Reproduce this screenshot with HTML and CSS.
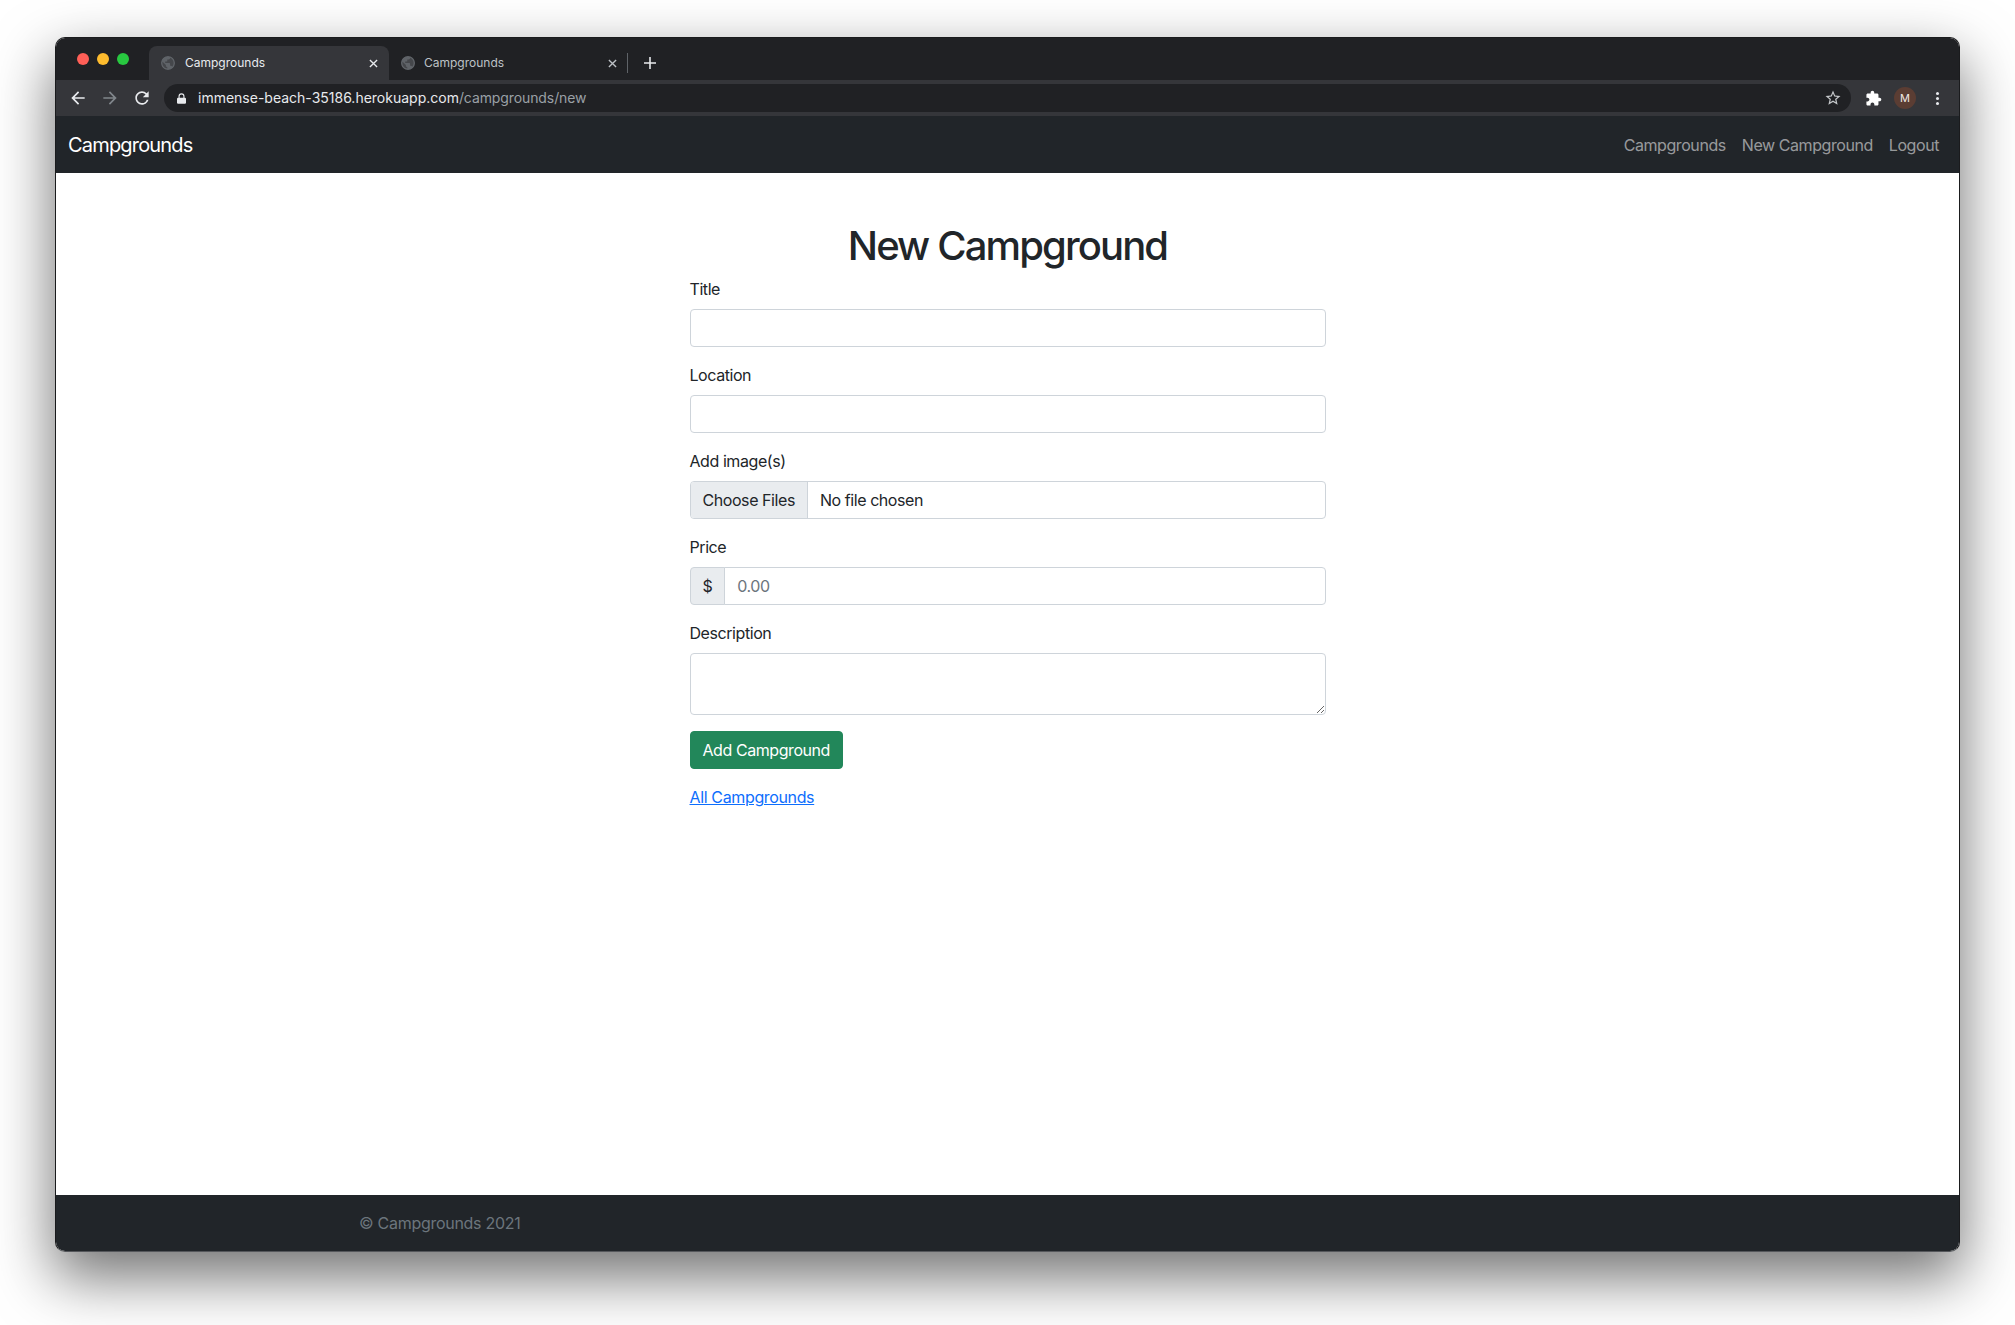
FILE: index.html
```html
<!DOCTYPE html>
<html lang="en">
  <head>
    <meta charset="UTF-8" />
    <meta name="viewport" content="width=device-width, initial-scale=1.0" />
    <link rel="stylesheet" href="styles.css">
    <title>New Campground</title>
  </head>

  <body>
    <div class="window">
      <!-- browser chrome -->
      <div class="tabstrip">
        <div class="lights">
          <span class="light red"></span>
          <span class="light yellow"></span>
          <span class="light green"></span>
        </div>
        <div class="tab active">
          <svg class="favicon" viewBox="2 2 20 20"><path d="M12 2C6.48 2 2 6.48 2 12s4.48 10 10 10 10-4.48 10-10S17.52 2 12 2zm-1 17.93c-3.95-.49-7-3.85-7-7.93 0-.62.08-1.21.21-1.79L9 15v1c0 1.1.9 2 2 2v1.93zm6.9-2.54c-.26-.81-1-1.39-1.9-1.39h-1v-3c0-.55-.45-1-1-1H8v-2h2c.55 0 1-.45 1-1V7h2c1.1 0 2-.9 2-2v-.41c2.93 1.19 5 4.06 5 7.41 0 2.08-.8 3.97-2.1 5.39z"/></svg>
          <span class="tab-title">Campgrounds</span>
          <svg class="tab-close" viewBox="0 0 10 10"><path d="M1 1l8 8M9 1l-8 8"/></svg>
        </div>
        <div class="tab">
          <svg class="favicon" viewBox="2 2 20 20"><path d="M12 2C6.48 2 2 6.48 2 12s4.48 10 10 10 10-4.48 10-10S17.52 2 12 2zm-1 17.93c-3.95-.49-7-3.85-7-7.93 0-.62.08-1.21.21-1.79L9 15v1c0 1.1.9 2 2 2v1.93zm6.9-2.54c-.26-.81-1-1.39-1.9-1.39h-1v-3c0-.55-.45-1-1-1H8v-2h2c.55 0 1-.45 1-1V7h2c1.1 0 2-.9 2-2v-.41c2.93 1.19 5 4.06 5 7.41 0 2.08-.8 3.97-2.1 5.39z"/></svg>
          <span class="tab-title">Campgrounds</span>
          <svg class="tab-close" viewBox="0 0 10 10"><path d="M1 1l8 8M9 1l-8 8"/></svg>
        </div>
        <span class="tab-divider"></span>
        <svg class="new-tab" viewBox="0 0 12 12"><path d="M6 0v12M0 6h12"/></svg>
      </div>

      <div class="toolbar">
        <span class="tool"><svg class="icon" viewBox="0 0 24 24"><path d="M20 11H7.83l5.59-5.59L12 4l-8 8 8 8 1.41-1.41L7.83 13H20v-2z"/></svg></span>
        <span class="tool dim"><svg class="icon" viewBox="0 0 24 24"><path d="M12 4l-1.41 1.41L16.17 11H4v2h12.17l-5.58 5.59L12 20l8-8z"/></svg></span>
        <span class="tool"><svg class="icon" viewBox="0 0 24 24"><path d="M17.65 6.35A7.958 7.958 0 0012 4c-4.42 0-7.99 3.58-7.99 8s3.57 8 7.99 8c3.73 0 6.84-2.55 7.73-6h-2.08A5.99 5.99 0 0112 18c-3.31 0-6-2.69-6-6s2.69-6 6-6c1.66 0 3.14.69 4.22 1.78L13 11h7V4l-2.35 2.35z"/></svg></span>
        <div class="omnibox">
          <svg class="lock" viewBox="0 0 12 14"><path d="M2 6V4a4 4 0 018 0v2h.5A1.5 1.5 0 0112 7.500v5a1.500 1.500 0 01-1.500 1.500h-9A1.500 1.500 0 010 12.500v-5A1.500 1.500 0 011.500 6zm1.500 0h5V4a2.500 2.500 0 00-5 0z"/></svg>
          <span class="url"><span class="host">immense-beach-35186.herokuapp.com</span>/campgrounds/new</span>
          <svg class="star" viewBox="0 0 24 24"><path d="M22 9.240l-7.190-.62L12 2 9.190 8.630 2 9.240l5.460 4.730L5.820 21 12 17.270 18.180 21l-1.630-7.030L22 9.240zM12 15.400l-3.760 2.270 1-4.280-3.320-2.880 4.380-.38L12 6.100l1.710 4.040 4.380.38-3.320 2.880 1 4.280L12 15.400z"/></svg>
        </div>
        <span class="tool puzzle"><svg class="icon" viewBox="0 0 24 24"><path d="M20.500 11H19V7c0-1.100-.9-2-2-2h-4V3.500C13 2.120 11.880 1 10.500 1S8 2.120 8 3.500V5H4c-1.100 0-1.990.9-1.990 2v3.800H3.500c1.490 0 2.700 1.210 2.700 2.700s-1.210 2.700-2.700 2.700H2V20c0 1.100.9 2 2 2h3.800v-1.500c0-1.490 1.210-2.700 2.700-2.700 1.490 0 2.700 1.210 2.700 2.700V22H17c1.100 0 2-.9 2-2v-4h1.500c1.380 0 2.500-1.120 2.500-2.500S21.880 11 20.500 11z"/></svg></span>
        <span class="tool"><span class="avatar">M</span></span>
        <span class="tool"><span class="dots"><i></i><i></i><i></i></span></span>
      </div>

      <!-- page -->
      <nav class="navbar">
        <a class="brand" href="#">Campgrounds</a>
        <div class="nav-links">
          <a href="#">Campgrounds</a>
          <a href="#">New Campground</a>
          <a href="#">Logout</a>
        </div>
      </nav>

      <main class="content">
        <h1>New Campground</h1>
        <form>
          <div class="field">
            <label for="title">Title</label>
            <input class="control" type="text" id="title" />
          </div>
          <div class="field">
            <label for="location">Location</label>
            <input class="control" type="text" id="location" />
          </div>
          <div class="field">
            <label for="images">Add image(s)</label>
            <input class="control file" type="file" id="images" multiple />
          </div>
          <div class="field">
            <label for="price">Price</label>
            <div class="input-group">
              <span class="addon">$</span>
              <input class="control" type="text" id="price" placeholder="0.00" />
            </div>
          </div>
          <div class="field">
            <label for="description">Description</label>
            <textarea class="control" id="description"></textarea>
          </div>
          <div class="field">
            <button type="submit">Add Campground</button>
          </div>
        </form>
        <a class="back" href="#">All Campgrounds</a>
      </main>

      <footer class="footer">
        <span>© Campgrounds 2021</span>
      </footer>
    </div>
  </body>
</html>
```

FILE: styles.css
```css
* {
  box-sizing: border-box;
}

body {
  margin: 0;
  height: 1325px;
  overflow: hidden;
  padding: 37px 55px 0;
  background-color: #fff;
  font-family: Inter, "Liberation Sans", sans-serif;
  font-size: 16px;
  line-height: 24px;
  letter-spacing: -0.43px;
  color: #212529;
}

.window {
  display: flex;
  flex-direction: column;
  height: 1215px;
  background-color: #fff;
  border: 1px solid #1a1b1d;
  border-bottom-color: #55575b;
  border-radius: 10px;
  overflow: hidden;
  box-shadow: 0 24px 58px 2px rgba(0, 0, 0, 0.55);
}

/* browser chrome */
.tabstrip {
  display: flex;
  align-items: flex-end;
  height: 42px;
  background-color: #202124;
  font-size: 12px;
  letter-spacing: 0;
  flex-shrink: 0;
}

.lights {
  display: flex;
  gap: 8px;
  align-self: flex-start;
  width: 93px;
  padding: 15px 0 0 21px;
}

.light {
  width: 12px;
  height: 12px;
  border-radius: 50%;
}

.red {
  background-color: #ff5f57;
}

.yellow {
  background-color: #febc2e;
}

.green {
  background-color: #28c840;
}

.tab {
  display: flex;
  align-items: center;
  width: 240px;
  height: 34px;
  padding: 0 12px;
  color: #bdc1c6;
  border-radius: 8px 8px 0 0;
}

.tab.active {
  padding-right: 11px;
  background-color: #35363a;
  color: #e8eaed;
}

.favicon {
  width: 14px;
  height: 14px;
  fill: #5f6368;
  background-color: #45474b;
  border-radius: 50%;
  flex-shrink: 0;
}

.tab-title {
  flex: 1;
  margin-left: 9px;
  line-height: 16px;
}

.tab.active .tab-title {
  margin-left: 10px;
}

.tab-close {
  width: 9px;
  height: 9px;
  fill: none;
  stroke: #e8eaed;
  stroke-width: 1.5;
}

.tab:not(.active) .tab-close {
  stroke: #bdc1c6;
}

.tab-divider {
  align-self: flex-end;
  width: 1px;
  height: 20px;
  margin: 0 0 7px -2px;
  background-color: #5f6368;
}

.new-tab {
  width: 12px;
  height: 12px;
  margin: 0 0 11px 16px;
  fill: none;
  stroke: #e8eaed;
  stroke-width: 1.6;
}

.toolbar {
  display: flex;
  align-items: center;
  height: 36px;
  padding: 0 6px;
  background-color: #35363a;
  flex-shrink: 0;
}

.tool {
  display: flex;
  align-items: center;
  justify-content: center;
  width: 32px;
  height: 28px;
  flex-shrink: 0;
}

.icon {
  width: 20px;
  height: 20px;
  fill: #e8eaed;
}

.tool.dim .icon {
  fill: #80868b;
}

.tool.puzzle .icon {
  width: 17px;
  height: 17px;
  fill: #fff;
}

.omnibox {
  display: flex;
  align-items: center;
  flex: 1;
  height: 28px;
  margin: 0 6px;
  padding: 0 8px 0 13px;
  background-color: #202124;
  border-radius: 14px;
  font-size: 14px;
  letter-spacing: -0.1px;
  color: #9aa0a6;
}

.lock {
  width: 9px;
  height: 11px;
  fill: #e8eaed;
}

.url {
  flex: 1;
  margin-left: 12px;
}

.host {
  color: #e8eaed;
  letter-spacing: 0;
}

.star {
  width: 18px;
  height: 18px;
  margin-right: 1px;
  fill: #c4c7ca;
}

.avatar {
  display: flex;
  align-items: center;
  justify-content: center;
  width: 22px;
  height: 22px;
  border-radius: 50%;
  background-color: #5b3d33;
  color: #f1e9e5;
  font-size: 11px;
  letter-spacing: 0;
}

.dots {
  display: flex;
  flex-direction: column;
  gap: 2px;
}

.dots i {
  display: block;
  width: 3px;
  height: 3px;
  border-radius: 50%;
  background-color: #e8eaed;
}

/* page */
.navbar {
  display: flex;
  align-items: center;
  justify-content: space-between;
  height: 57px;
  padding: 0 12px;
  background-color: #212529;
  flex-shrink: 0;
}

.brand {
  color: #fff;
  font-size: 20px;
  letter-spacing: -0.82px;
  text-decoration: none;
}

.nav-links {
  display: flex;
}

.nav-links a {
  padding: 8px;
  color: rgba(255, 255, 255, 0.55);
  text-decoration: none;
}

.content {
  flex: 1;
  width: 636px;
  margin: 0 auto;
  padding-top: 49px;
}

h1 {
  margin: 0 0 7px;
  font-size: 40px;
  line-height: 48px;
  font-weight: 500;
  letter-spacing: -1.88px;
  text-align: center;
}

.field {
  margin-bottom: 16px;
}

label {
  display: block;
  margin-bottom: 8px;
}

.control {
  display: block;
  width: 100%;
  height: 38px;
  padding: 6px 12px;
  font: inherit;
  letter-spacing: inherit;
  color: #212529;
  background-color: #fff;
  border: 1px solid #ced4da;
  border-radius: 4px;
}

.control::placeholder {
  color: #6c757d;
}

.file {
  overflow: hidden;
}

.file::file-selector-button {
  height: 38px;
  margin: -7px 12px -7px -12px;
  padding: 6px 12px;
  font: inherit;
  letter-spacing: inherit;
  color: #212529;
  background-color: #e9ecef;
  border: 0;
  border-right: 1px solid #ced4da;
  border-radius: 0;
}

textarea.control {
  height: 62px;
}

.input-group {
  display: flex;
}

.addon {
  padding: 6px 12px;
  background-color: #e9ecef;
  border: 1px solid #ced4da;
  border-radius: 4px 0 0 4px;
}

.input-group .control {
  flex: 1;
  margin-left: -1px;
  border-radius: 0 4px 4px 0;
}

button {
  height: 38px;
  padding: 6px 12px;
  font: inherit;
  letter-spacing: inherit;
  color: #fff;
  background-color: #22875a;
  border: 1px solid #22875a;
  border-radius: 4px;
  cursor: pointer;
}

.back {
  color: #0d6efd;
  letter-spacing: -0.36px;
}

.footer {
  height: 56px;
  padding: 16px 0 0 303px;
  background-color: #212529;
  color: #6c757d;
  letter-spacing: -0.28px;
  flex-shrink: 0;
}
```
